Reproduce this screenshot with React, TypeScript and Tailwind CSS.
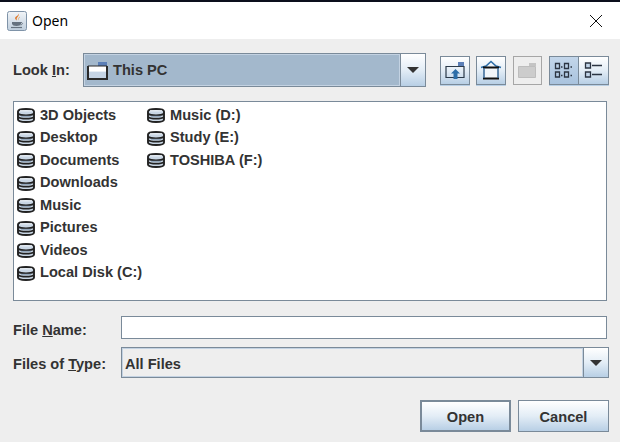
function Disk() {
  return (
    <svg width="18" height="15" viewBox="0 0 18 15" className="shrink-0">
      <path d="M1 3.500C1 1.800 4.500 1 9 1s8 .8 8 2.500v8c0 1.700-3.500 2.500-8 2.500s-8-.8-8-2.500z" fill="#c9d6e4" stroke="#222222" strokeWidth="1.900" />
      <path d="M3 2.800h12" stroke="#eef3f8" strokeWidth="1.200" />
      <path d="M1 5.500c1.500 1.300 4.500 1.800 8 1.800s6.500-.5 8-1.800" fill="none" stroke="#222222" strokeWidth="1.700" />
      <path d="M1 8.800c1.500 1.300 4.500 1.800 8 1.800s6.500-.5 8-1.800" fill="none" stroke="#222222" strokeWidth="1.700" />
      <path d="M4 8.300h10" stroke="#8fa5bd" strokeWidth="1" />
    </svg>
  );
}

function Row({ label }: { label: string }) {
  return (
    <div className="flex h-[22.5px] items-center whitespace-nowrap">
      <div className="flex w-[24px] shrink-0 pl-[1px]">
        <Disk />
      </div>
      <span>{label}</span>
    </div>
  );
}

function Arrow() {
  return (
    <svg width="12" height="6" viewBox="0 0 12 6">
      <path d="M0 0h12L6 6z" fill="#333" />
    </svg>
  );
}

const grad = "bg-gradient-to-b from-[#ffffff] via-[#e3edf6] to-[#b8cfe5]";

function ToolButton({ children, className }: { children: React.ReactNode; className?: string }) {
  return <div className={`flex h-[29px] w-[30px] items-center justify-center border border-[#7a8a99] shadow-[0_1px_0_#b8cfe5] ${className ?? grad}`}>{children}</div>;
}

export default function App() {
  return (
    <div className="flex h-[442px] w-[620px] flex-col overflow-hidden bg-[#eeeeee] font-['Liberation_Sans',sans-serif] text-[14.600px] font-bold text-[#333333]">
      <div className="h-[2px] bg-[#0c0f1c]" />
      <div className="flex h-[37px] shrink-0 items-center bg-white pl-[7px] pr-[17px]">
        <svg width="20" height="20" viewBox="0 0 20 20" className="shrink-0">
          <defs>
            <linearGradient id="jv" x1="0" y1="0" x2="0" y2="1">
              <stop offset="0" stopColor="#f2f5f8" />
              <stop offset="1" stopColor="#bfcedd" />
            </linearGradient>
          </defs>
          <rect x="0.500" y="0.500" width="19" height="19" rx="2" fill="url(#jv)" stroke="#7f93a8" />
          <path d="M11.500 2.500c1.500 2.500-3 3.500-1.500 7-2-1-3-3 0-4.500 .8-.6 1.500-1.300 1.500-2.500z" fill="#e0792a" />
          <path d="M13 5.500c0 1.500-2 2-1 4-1.500-1-1-2.500 1-4z" fill="#e8a25c" />
          <path d="M5 11h9v1.500c0 1.700-2 2.500-4.500 2.500S5 14.200 5 12.500z" fill="#66727f" />
          <path d="M14 11.500c2 0 2 2-.5 2.500" fill="none" stroke="#66727f" />
          <path d="M4 16.500h11" stroke="#66727f" strokeWidth="1.200" />
        </svg>
        <span className="ml-[5px] font-['Noto_Sans',sans-serif] text-[14px] font-normal text-black">Open</span>
        <svg width="14" height="14" viewBox="0 0 14 14" className="ml-auto">
          <path d="M1 1l12 12M13 1L1 13" stroke="#111" strokeWidth="1" fill="none" />
        </svg>
      </div>

      <div className="flex min-h-0 flex-1 flex-col pl-[13px] pr-[11px] pt-[14px]">
        <div className="flex h-[34px] items-center">
          <label className="w-[70px] shrink-0 pt-[2px]">
            Look <span className="underline">I</span>n:
          </label>
          <div className="flex h-[34px] w-[343px] border border-[#7a8a99]">
            <div className="flex min-w-0 flex-1 items-center border border-[#c3d2e2] bg-[#a3b8cc] pl-[2px]">
              <svg width="21" height="19" viewBox="0 0 21 19" className="shrink-0">
                <path d="M11 1h9v4h-9z" fill="#5b7fb8" />
                <path d="M1 5h19v13H1z" fill="#e8eef5" />
                <path d="M2 5h18v5H2z" fill="#ffffff" />
                <path d="M2 11h18v6H2z" fill="#c5d4e5" />
                <path d="M1 5v13h19V5" fill="none" stroke="#2a2a2a" strokeWidth="2" />
                <path d="M1 5h19" stroke="#2a2a2a" strokeWidth="1" />
              </svg>
              <span className="ml-[5px] pt-[2px]">This PC</span>
            </div>
            <div className={`flex w-[25px] shrink-0 items-center justify-center border-l border-[#7a8a99] ${grad}`}>
              <Arrow />
            </div>
          </div>
          <div className="ml-[14px] flex items-center">
            <ToolButton>
              <svg width="20" height="18" viewBox="0 0 20 18">
                <path d="M13 1h6v4h-6z" fill="#5b7fb8" />
                <path d="M1 5.500h18v11H1z" fill="none" stroke="#2b3a4a" strokeWidth="1.200" />
                <path d="M10.500 8l4.500 4.500h-2.500V18h-4v-5.500H6z" fill="#2d6ea8" />
              </svg>
            </ToolButton>
            <ToolButton className={`ml-[6px] ${grad}`}>
              <svg width="22" height="20" viewBox="0 0 22 20">
                <path d="M1 7.500l5-1.500 5-4.500 5 4.500 5 1.500" fill="none" stroke="#2d6ea8" strokeWidth="1.600" />
                <path d="M4 8h14v10H4z" fill="#f2f6fa" />
                <path d="M3 7.500h16M3 18.500h16" stroke="#111" strokeWidth="2" />
                <path d="M4 8v10M18 8v10" stroke="#2d5f90" strokeWidth="1.400" />
              </svg>
            </ToolButton>
            <div className="ml-[7px] flex h-[29px] w-[29px] items-center justify-center border border-[#a6a6a6]">
              <svg width="19" height="16" viewBox="0 0 19 16">
                <path d="M11 1h7v3h-7z" fill="#c4c4c4" />
                <path d="M.500 4.500h17v11H.500z" fill="#cccccc" stroke="#bdbdbd" />
              </svg>
            </div>
            <ToolButton className="ml-[7px] bg-gradient-to-b from-[#c3d6ea] to-[#a9c3de]">
              <svg width="20" height="18" viewBox="0 0 20 18" fill="none" stroke="#2b3442" strokeWidth="1.300">
                <path d="M1.500 2.500h4v5h-4zM10.500 2.500h4v5h-4zM1.500 11h4v5h-4zM10.500 11h4v5h-4z" />
                <path d="M7 6h1.500M16.500 6H18M7 14.500h1.500M16.500 14.500H18" />
              </svg>
            </ToolButton>
            <ToolButton className={`border-l-0 ${grad}`}>
              <svg width="20" height="18" viewBox="0 0 20 18" fill="none" stroke="#2b3442" strokeWidth="1.300">
                <path d="M1.500 2h5v5h-5zM1.500 11h5v5h-5z" fill="#c3d6ea" />
                <path d="M8 4.500h10M8 13.500h10" />
              </svg>
            </ToolButton>
          </div>
        </div>

        <div className="mt-[14px] flex h-[200px] w-[594px] gap-[4px] border border-[#7a8a99] bg-white pl-[2px] pt-[2.500px]">
          <div className="w-[126px]">
            {["3D Objects", "Desktop", "Documents", "Downloads", "Music", "Pictures", "Videos", "Local Disk (C:)"].map((l) => (
              <Row key={l} label={l} />
            ))}
          </div>
          <div>
            {["Music (D:)", "Study (E:)", "TOSHIBA (F:)"].map((l) => (
              <Row key={l} label={l} />
            ))}
          </div>
        </div>

        <div className="mt-[15px] flex h-[23px] items-center">
          <label className="w-[108px] shrink-0 pt-[6px]">
            File <span className="underline">N</span>ame:
          </label>
          <div className="h-[23px] w-[486px] border border-[#7a8a99] bg-white" />
        </div>

        <div className="mt-[8px] flex h-[31px] items-center">
          <label className="w-[108px] shrink-0 pt-[4px]">
            Files of <span className="underline">T</span>ype:
          </label>
          <div className="flex h-[31px] w-[488px] border border-[#7a8a99]">
            <div className="flex min-w-0 flex-1 items-center border border-[#c3d2e2] pl-[2px] pt-[4px]">All Files</div>
            <div className={`flex w-[25px] shrink-0 items-center justify-center border-l border-[#7a8a99] ${grad}`}>
              <Arrow />
            </div>
          </div>
        </div>

        <div className="mt-[22px] flex justify-end gap-[7px]">
          <button className={`h-[32px] w-[91px] border-[2px] border-[#7a8a99] pt-[3px] font-bold ${grad}`}>Open</button>
          <button className={`h-[32px] w-[91px] border border-[#7a8a99] pt-[3px] font-bold ${grad}`}>Cancel</button>
        </div>
      </div>
    </div>
  );
}
